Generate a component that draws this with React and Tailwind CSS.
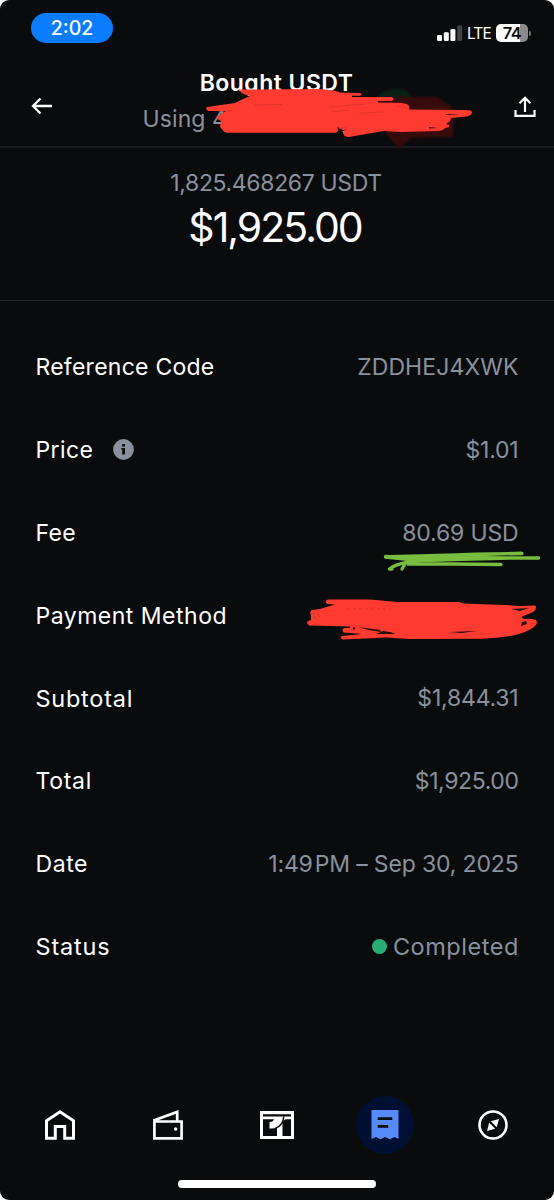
import clsx from "clsx";

const rows = [
  { label: "Reference Code", value: "ZDDHEJ4XWK", labelClass: "tracking-[0.25px]", valueClass: "tracking-[0.1px]" },
  { label: "Price", value: "$1.01", info: true, labelClass: "tracking-[0.4px]", valueClass: "tracking-[-0.2px]" },
  { label: "Fee", value: "80.69 USD", labelClass: "tracking-[0.3px]", valueClass: "tracking-[-0.15px]" },
  { label: "Payment Method", hidden: true, labelClass: "tracking-[0.5px]" },
  { label: "Subtotal", value: "$1,844.31", labelClass: "text-[23.5px] tracking-[0.75px]", valueClass: "tracking-[-0.2px]" },
  { label: "Total", value: "$1,925.00", labelClass: "tracking-[0.7px]", valueClass: "tracking-[-0.4px]" },
  { label: "Date", value: "1:49\u200aPM – Sep 30, 2025", labelClass: "tracking-[0.6px]", valueClass: "tracking-[-0.15px]" },
  { label: "Status", value: "Completed", dot: true, labelClass: "text-[23.5px] tracking-[0.8px]", valueClass: "text-[23.5px] tracking-[0.55px] -mr-[0.5px]" },
];

const StatusBar = () => (
  <div className="flex h-[60px] items-start justify-between pl-[31px] pr-[23px] pt-[13px] text-white">
    <div className="flex h-[30px] w-[82px] items-center justify-center rounded-full bg-[#0a7cff] pt-[2px] text-[19.5px] font-medium tracking-[0px]">
      2:02
    </div>
    <div className="mt-[10px] flex h-5 items-center">
      <svg width="26" height="16" viewBox="0 0 26 16" className="mr-1">
        <rect x="0" y="10" width="5" height="6" rx="1.3" fill="#fff" />
        <rect x="6.8" y="7.2" width="5" height="8.8" rx="1.3" fill="#fff" />
        <rect x="13.4" y="4" width="5" height="12" rx="1.3" fill="#fff" />
        <rect x="20.2" y="0.5" width="5" height="15.5" rx="1.3" fill="#424345" />
      </svg>
      <span className="w-[25px] pt-px text-[15.5px] leading-5 tracking-[-0.9px]">LTE</span>
      <div className="ml-1 flex h-[18px] w-8 items-center justify-center rounded-[5px] bg-linear-to-r from-white from-75% to-[#8b8b8d] to-75% text-[16.5px] font-semibold tracking-[-0.5px] text-[#0a0b0d]">
        74
      </div>
      <div className="ml-px h-[5px] w-[2px] rounded-r-full bg-[#77787a]" />
    </div>
  </div>
);

// red marker over the card number in the header
const HeaderMark = () => (
  <svg className="pointer-events-none absolute left-[200px] top-[80px]" width="280" height="70" viewBox="200 80 280 70">
    <g className="blur-[1px]">
      <path d="M378 96Q384 89 397 89Q409 89 411 96L413 100H378Z" fill="#0a2015" />
      <path d="M380 98L398 97L437 97L452 107L454 118L453 137L411 138L399 148L386 134Z" fill="#370b0c" />
    </g>
    <path
      d="M207 107Q205 109 208 111L226 111L218 116L216 118L221 121L220 127L223 130Q223 132 227 132.8H336L340 129L343 132Q343 137 349 137L366 134L384 131L400 132L439 131Q444 130 445 128L449 127V125L446 124L450 121L451 118L467 116.500Q472 115 472 112Q472 110 465 110L409 109.500L409 106Q408 103 397 102.700L378 102.500V101L392 101Q395 99 392 97L352 97V95.800H360Q363 94 360 93L340 92.500L334 90.500L320 89L240 89.500Q240 94 250 96L241 100L235 103Z"
      fill="#ff3b31"
    />
    <path d="M446 114L460 114.200L447 115Z M429 127L438 128L429 128.500Z M337 127L343 130L347 129L339 133Z" fill="#2b0d0e" />
    <path d="M395 106L408 108M218 111L233 111M217 119L224 120M338 127L347 128M254 105L282 104.500M330 107L366 104M331 112L350 110M360 113L384 112" fill="none" stroke="#c9302a" strokeWidth="0.600" />
  </svg>
);

const PaymentMark = () => (
  <svg className="pointer-events-none absolute left-[300px] top-[595px]" width="250" height="48" viewBox="300 595 250 48">
    <path
      d="M328 599.500Q324 601 327 604L335 604.500L320 609L312 610Q309 612 311 615L311 620L308 621Q306 623 309 625.500L350 626.500V628H344Q341 630 344 632.500L362 634L342 636Q339 638 343 639.500L386 637.500Q395 638 409 639L480 638.700Q514 638 529 630Q537 626 537 622Q536 618 524 619L521 617L533 612Q538 608 535 605.500L521 606L505 605L463 603.500L459 602L398 602L370 599.500Z"
      fill="#ff3b31"
    />
    <path d="M511 609L529 608L520 611Z M522 622L526 621L527 624L521 626Z M353 627L356 628L353 630Z M358 627L380 630L381 632L369 630Z M376 634L396 634L390 632L383 631Z M449 632L477 631L462 633Z" fill="#240d0e" />
    <path d="M312 613L319 614L318 617L312 617M321 616L314 618L319 620M347 609H391M467 606.500H470" fill="none" stroke="#b82c28" strokeWidth="0.600" strokeDasharray="3 3" />
  </svg>
);

// green underline below the fee
const FeeMark = () => (
  <svg className="pointer-events-none absolute left-[380px] top-[548px]" width="164" height="28" viewBox="380 548 164 28" fill="none" stroke="#78bd3f" strokeWidth="3.300" strokeLinecap="round" strokeLinejoin="round">
    <path d="M385.500 556.500C420 557 455 553.500 522 553.500C485 554 449 556 417 560L405 559L385.500 557" />
    <path d="M386 557L538.500 558C490 557.500 466 560 440 560C416 560 398 562 389.500 569L392 569" />
    <path d="M501 564.500L453 564L408 564" />
    <path d="M402 569L406 562" />
  </svg>
);

const navItems = [
  {
    name: "home",
    icon: (
      <svg width="30" height="30" viewBox="0 0 30 30" fill="none" stroke="#fff" strokeWidth="3">
        <path d="M1.500 28.200V10.700L15 1.800L28.500 10.700V28.200H19.700V16.400H10.300V28.200Z" />
      </svg>
    ),
  },
  {
    name: "wallet",
    icon: (
      <svg width="30" height="30" viewBox="0 0 30 30" fill="none" stroke="#fff" strokeWidth="2.700">
        <path d="M1.400 11.500H28.600V28.300H1.400Z M1.400 11V10.200L24.200 1.900V11" />
        <circle cx="22.700" cy="19" r="1.700" fill="#fff" stroke="none" />
      </svg>
    ),
  },
  {
    name: "market",
    icon: (
      <svg width="34" height="28" viewBox="0 0 34 28">
        <path d="M0 0H34V28H0Z" fill="#fff" />
        <path d="M3 3.200H31V5.600H3Z M3 8.300H14Q13.500 10.700 9.500 11V17.500Q14.500 18 17 16V25H3Z M22.500 11.500Q24.500 8.300 26 8.300H31V25H22.500Z" fill="#0a0b0d" />
        <path d="M23.700 5.400Q23.500 14 15.500 17.200" fill="none" stroke="#0a0b0d" strokeWidth="1.500" />
      </svg>
    ),
  },
  {
    name: "orders",
    active: true,
    icon: (
      <svg width="28" height="30" viewBox="0 0 28 30">
        <path d="M0.500 0H27.500V29L23.500 27L19 29.200L14 27L9.500 29.200L5 27L0.500 29Z" fill="#578bfa" />
        <path d="M6.700 7.200H21.300V10H6.700Z M6.700 15H17.200V17.800H6.700Z" fill="#0a0b0d" />
      </svg>
    ),
  },
  {
    name: "explore",
    icon: (
      <svg width="30" height="30" viewBox="0 0 30 30">
        <circle cx="15" cy="15" r="13.500" fill="none" stroke="#fff" strokeWidth="2.600" />
        <path d="M21 9L12.800 11.200L18.700 17.200Z M9 21L11.200 12.800L17.200 18.700Z" fill="#fff" />
      </svg>
    ),
  },
];

const BottomNav = () => (
  <nav className="flex h-[60px] items-center justify-between pl-[31px] pr-[32px]">
    {navItems.map((item) => (
      <button
        key={item.name}
        className={clsx("flex size-[58px] items-center justify-center rounded-full", item.active && "bg-[#010f32]")}
      >
        {item.icon}
      </button>
    ))}
  </nav>
);

const App = () => {
  return (
    <div className="h-[1200px] w-[554px] bg-white font-['Inter',sans-serif]">
      <div className="relative flex h-full flex-col overflow-hidden rounded-[9px] bg-[#0a0b0d]">
        <StatusBar />

        <header className="flex h-[88px] items-start justify-between border-b-2 border-[#1c1d20] pl-[31px] pr-[18px] text-white">
          <svg width="22" height="18" viewBox="0 0 22 18" fill="none" stroke="#fff" strokeWidth="2.300" className="mt-[37px]">
            <path d="M21 9H2M9.500 1.500L2 9L9.500 16.500" />
          </svg>
          <div className="mt-[8px] w-[285px]">
            <h1 className="pr-[14px] text-center text-[23px] font-semibold leading-[30px] tracking-[0.45px]">Bought USDT</h1>
            <p className="pl-[1.5px] text-[23px] leading-[42px] tracking-[0.1px] text-[#8a919e]">Using 4</p>
          </div>
          <svg width="22" height="22" viewBox="0 0 22 22" fill="none" stroke="#fff" strokeWidth="2.200" className="mt-[36px]">
            <path d="M1.500 14V19.800H20.500V14M11 16V1.800M5.500 7.300L11 1.800L16.500 7.300" />
          </svg>
        </header>

        <section className="flex h-[153px] flex-col items-center border-b border-[#2a2c30] pt-5">
          <p className="pr-[2px] text-[23px] leading-[30px] tracking-[-0.35px] text-[#8a919e]">1,825.468267 USDT</p>
          <p className="pr-[4px] text-[41px] leading-[58px] tracking-[-2px] text-white">$1,925.00</p>
        </section>

        <div className="mt-[25px] flex flex-col px-[35.5px] text-[23px]">
          {rows.map((row) => (
            <div key={row.label} className="flex h-[82.8px] items-center justify-between">
              <div className="flex items-center text-white">
                <span className={row.labelClass}>{row.label}</span>
                {row.info && (
                  <svg width="21" height="21" viewBox="0 0 21 21" className="-mt-px ml-5">
                    <circle cx="10.500" cy="10.500" r="10.400" fill="#8a919e" />
                    <path d="M9.200 5.100H12V7.600H9.200Z M8.400 9H12V15.500H9.200V10.500H8.400Z" fill="#0a0b0d" />
                  </svg>
                )}
              </div>
              {!row.hidden && (
                <div className="flex items-center text-[#8a919e]">
                  {row.dot && <span className="mr-[6px] size-[15px] rounded-full bg-[#27ad75]" />}
                  <span className={row.valueClass}>{row.value}</span>
                </div>
              )}
            </div>
          ))}
        </div>

        <div className="mt-auto">
          <BottomNav />
          <div className="mx-auto mb-[12px] mt-[25px] h-[8px] w-[198px] rounded-full bg-white" />
        </div>

        <HeaderMark />
        <FeeMark />
        <PaymentMark />
      </div>
    </div>
  );
};

export default App;
